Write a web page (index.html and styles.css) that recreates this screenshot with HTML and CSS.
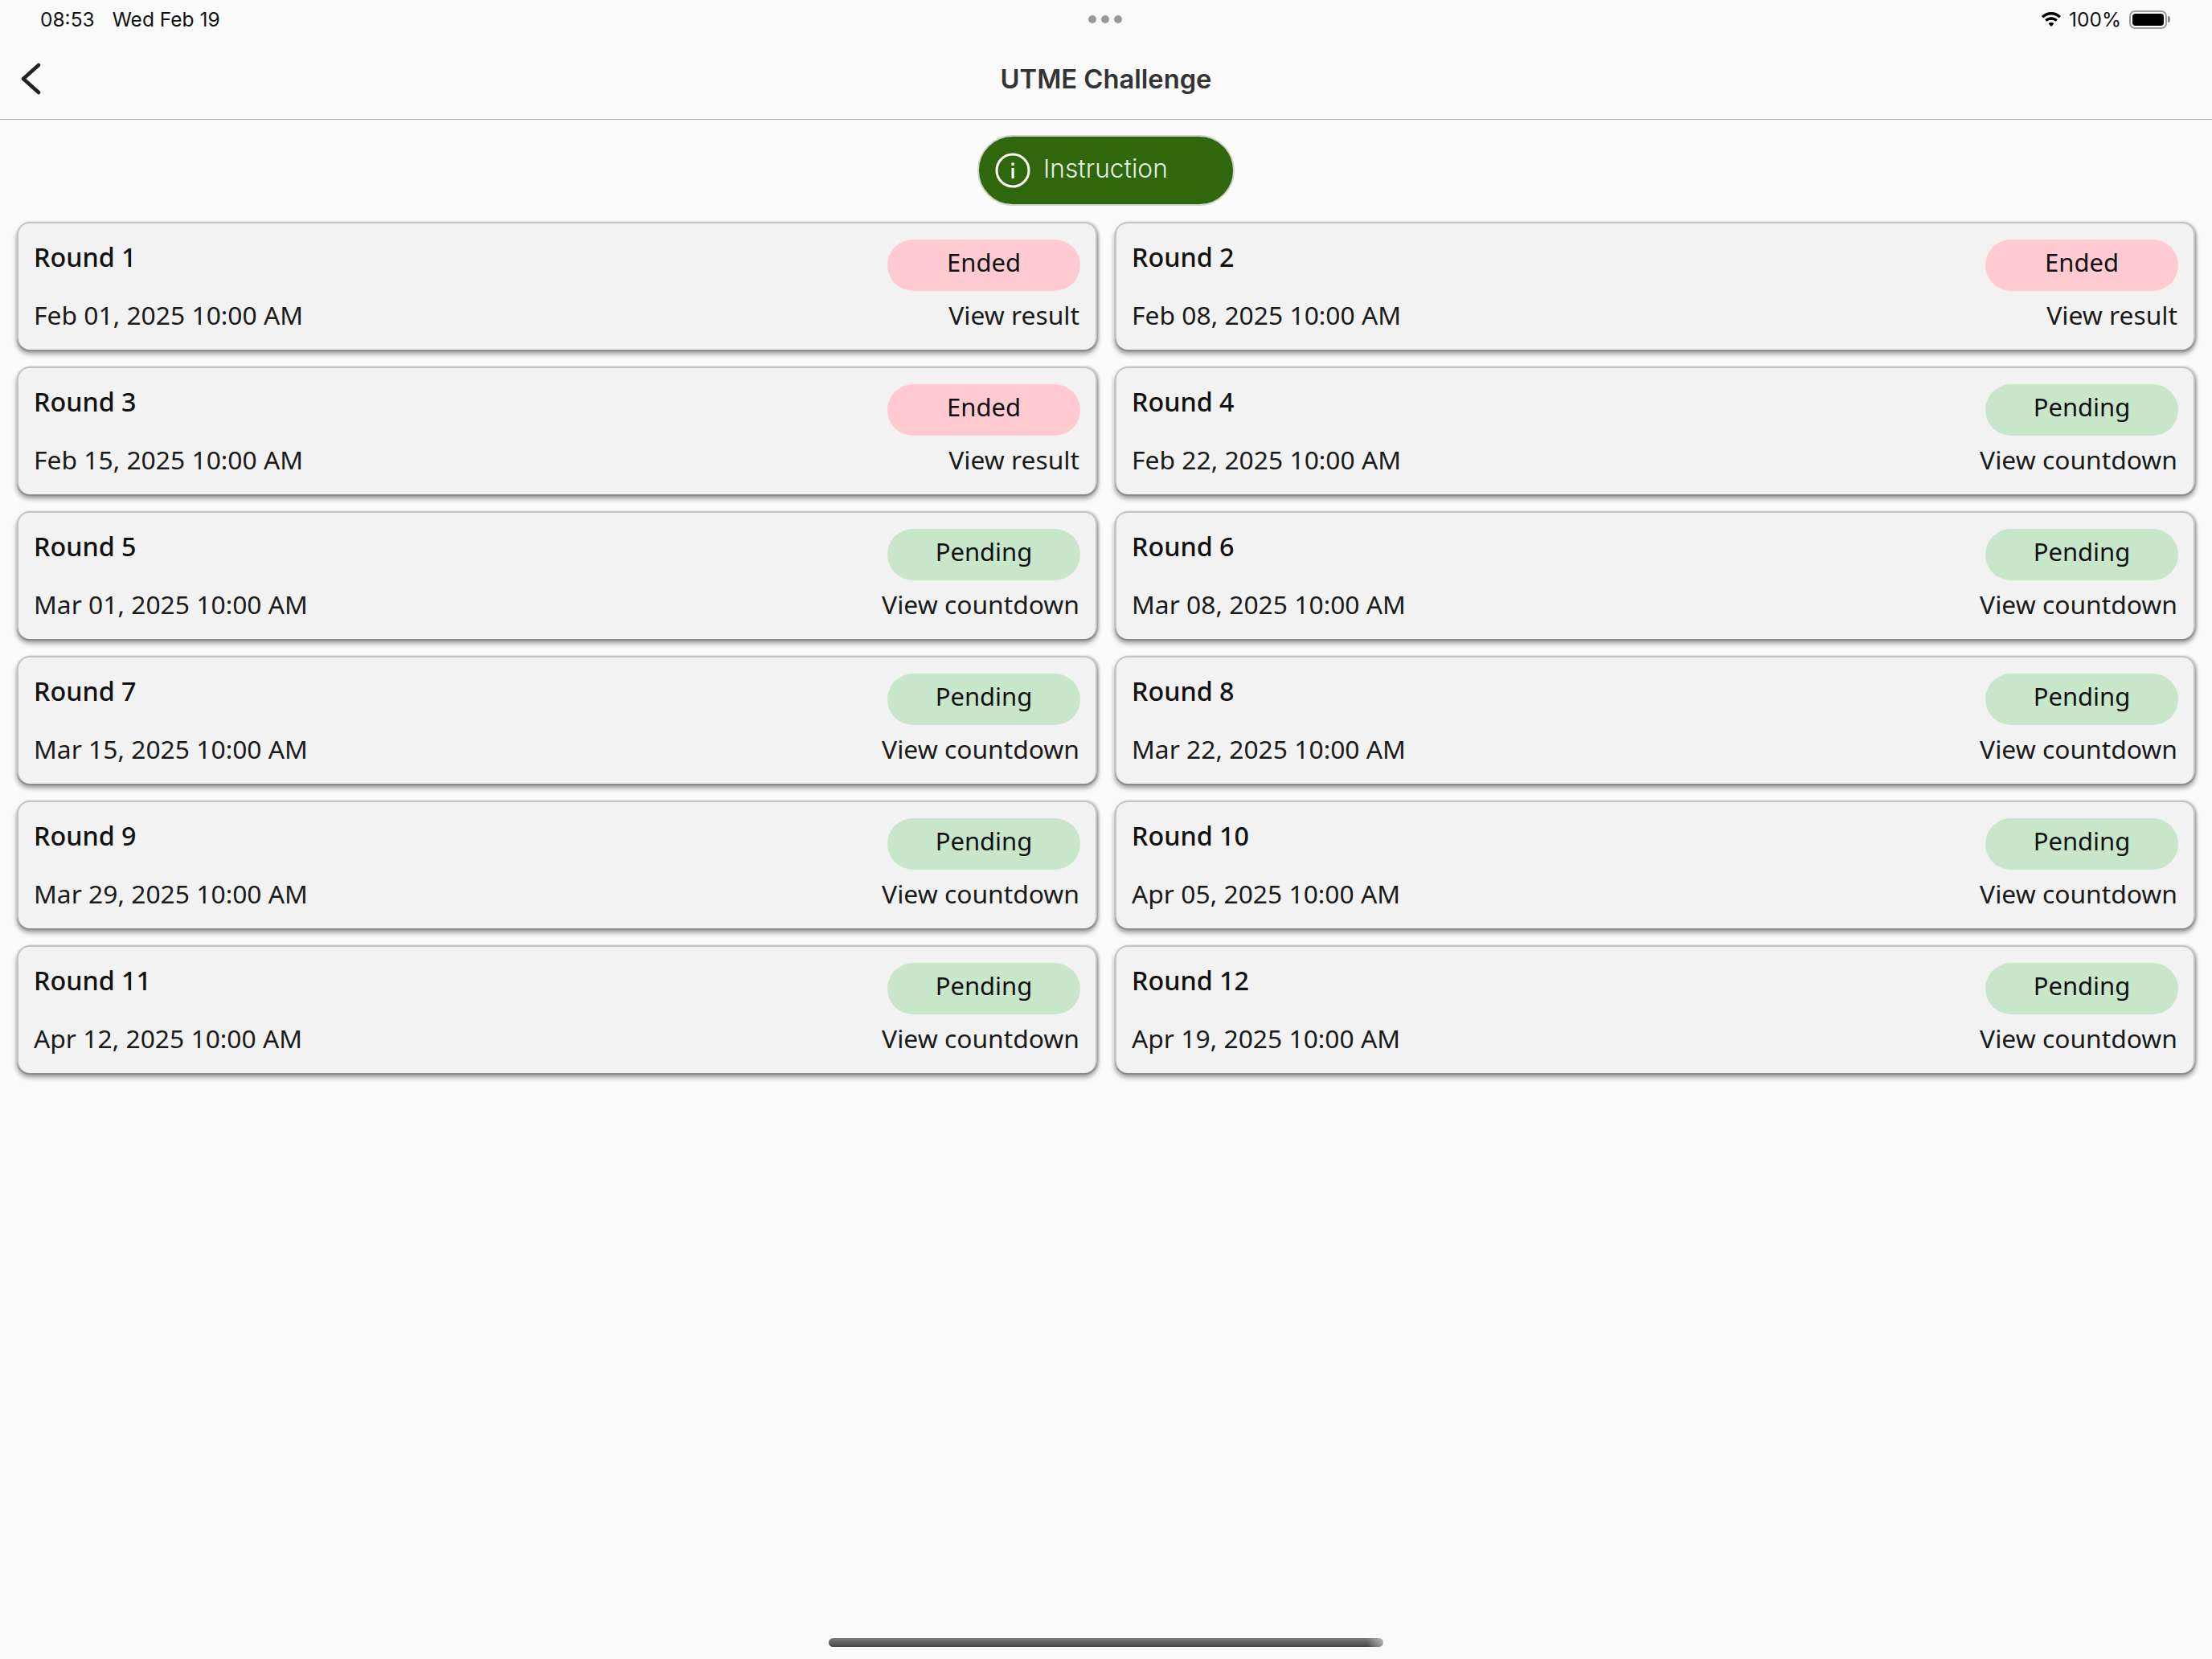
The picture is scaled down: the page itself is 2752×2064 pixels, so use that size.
FILE: index.html
```html
<!DOCTYPE html>
<html lang="en">
<head>
    <meta charset="UTF-8">
    <meta name="viewport" content="width=device-width, initial-scale=1.0">
    <title>UTME Challenge</title>
    <link rel="stylesheet" href="styles.css">
</head>
<body>
    <div class="status-bar">
        <div class="status-left"><span>08:53</span><span>Wed Feb 19</span></div>
        <div class="status-dots"><i></i><i></i><i></i></div>
        <div class="status-right">
            <svg class="wifi" width="28" height="21" viewBox="0 0 28 21"><path d="M14 4.600c3.700 0 7.100 1.400 9.700 3.800l2.300-2.400C22.800 2.900 18.600 1 14 1S5.200 2.900 2 6l2.300 2.400C6.900 6 10.300 4.600 14 4.600z"/><path d="M14 10.700c2.100 0 4 .8 5.500 2.100l2.300-2.400C19.700 8.500 17 7.300 14 7.300s-5.700 1.200-7.800 3.100l2.300 2.400c1.500-1.300 3.400-2.100 5.500-2.100z"/><path d="M14 14c-1.300 0-2.500.5-3.400 1.400L14 19l3.400-3.600c-.9-.9-2.100-1.400-3.400-1.400z"/></svg>
            <span>100%</span>
            <div class="battery"><div class="battery-fill"></div></div>
            <div class="battery-cap"></div>
        </div>
    </div>

    <header class="top-bar">
        <svg class="back" width="26" height="40" viewBox="0 0 26 40"><path d="M23 3 L4 20 L23 37" fill="none" stroke="#222" stroke-width="4.500" stroke-linecap="round" stroke-linejoin="round"/></svg>
        <h1>UTME Challenge</h1>
    </header>

    <div class="instruction-row">
        <button class="instruction">
            <svg width="44" height="44" viewBox="0 0 44 44"><circle cx="22" cy="22" r="20" fill="none" stroke="#fff" stroke-width="3"/><rect x="20.500" y="19" width="3.200" height="13" fill="#fff"/><rect x="20.500" y="12.500" width="3.200" height="3.400" fill="#fff"/></svg>
            <span>Instruction</span>
        </button>
    </div>

    <section class="rounds">
        <div class="round">
            <div class="round-info"><h3>Round 1</h3><p>Feb 01, 2025 10:00 AM</p></div>
            <div class="round-status"><span class="pill ended">Ended</span><p>View result</p></div>
        </div>
        <div class="round">
            <div class="round-info"><h3>Round 2</h3><p>Feb 08, 2025 10:00 AM</p></div>
            <div class="round-status"><span class="pill ended">Ended</span><p>View result</p></div>
        </div>
        <div class="round">
            <div class="round-info"><h3>Round 3</h3><p>Feb 15, 2025 10:00 AM</p></div>
            <div class="round-status"><span class="pill ended">Ended</span><p>View result</p></div>
        </div>
        <div class="round">
            <div class="round-info"><h3>Round 4</h3><p>Feb 22, 2025 10:00 AM</p></div>
            <div class="round-status"><span class="pill pending">Pending</span><p>View countdown</p></div>
        </div>
        <div class="round">
            <div class="round-info"><h3>Round 5</h3><p>Mar 01, 2025 10:00 AM</p></div>
            <div class="round-status"><span class="pill pending">Pending</span><p>View countdown</p></div>
        </div>
        <div class="round">
            <div class="round-info"><h3>Round 6</h3><p>Mar 08, 2025 10:00 AM</p></div>
            <div class="round-status"><span class="pill pending">Pending</span><p>View countdown</p></div>
        </div>
        <div class="round">
            <div class="round-info"><h3>Round 7</h3><p>Mar 15, 2025 10:00 AM</p></div>
            <div class="round-status"><span class="pill pending">Pending</span><p>View countdown</p></div>
        </div>
        <div class="round">
            <div class="round-info"><h3>Round 8</h3><p>Mar 22, 2025 10:00 AM</p></div>
            <div class="round-status"><span class="pill pending">Pending</span><p>View countdown</p></div>
        </div>
        <div class="round">
            <div class="round-info"><h3>Round 9</h3><p>Mar 29, 2025 10:00 AM</p></div>
            <div class="round-status"><span class="pill pending">Pending</span><p>View countdown</p></div>
        </div>
        <div class="round">
            <div class="round-info"><h3>Round 10</h3><p>Apr 05, 2025 10:00 AM</p></div>
            <div class="round-status"><span class="pill pending">Pending</span><p>View countdown</p></div>
        </div>
        <div class="round">
            <div class="round-info"><h3>Round 11</h3><p>Apr 12, 2025 10:00 AM</p></div>
            <div class="round-status"><span class="pill pending">Pending</span><p>View countdown</p></div>
        </div>
        <div class="round">
            <div class="round-info"><h3>Round 12</h3><p>Apr 19, 2025 10:00 AM</p></div>
            <div class="round-status"><span class="pill pending">Pending</span><p>View countdown</p></div>
        </div>
    </section>

    <div class="home-bar"></div>
</body>
</html>
```

FILE: styles.css
```css
html {
    height: 100%;
}

body {
    font-family: "Noto Sans", Arial, sans-serif;
    margin: 0;
    padding: 0;
    height: 2064px;
    overflow: hidden;
    display: flex;
    flex-direction: column;
    background-color: #fbfbfb;
    color: #1a1a1a;
}

.status-bar {
    height: 48px;
    display: grid;
    grid-template-columns: 1fr auto 1fr;
    align-items: center;
    padding: 0 52px 0 50px;
    font-family: Inter, Arial, sans-serif;
    font-size: 24.500px;
    color: #111;
}

.status-left {
    display: flex;
    gap: 22px;
}

.status-dots {
    display: flex;
    gap: 6px;
}

.status-dots i {
    width: 10px;
    height: 10px;
    border-radius: 50%;
    background-color: #9a9a9a;
}

.status-right {
    display: flex;
    align-items: center;
    justify-content: flex-end;
}

.wifi {
    margin-right: 8px;
}

.battery {
    width: 47px;
    height: 23px;
    margin-left: 10px;
    border: 2px solid #9c9c9c;
    border-radius: 7px;
    padding: 2px;
    box-sizing: border-box;
}

.battery-fill {
    height: 100%;
    background-color: #000;
    border-radius: 4px;
}

.battery-cap {
    width: 3px;
    height: 8px;
    margin-left: 1px;
    background-color: #8c8c8c;
    border-radius: 0 3px 3px 0;
}

.top-bar {
    height: 100px;
    display: flex;
    align-items: center;
    justify-content: center;
    position: relative;
    border-bottom: 1px solid #b4b4b4;
}

.top-bar h1 {
    margin: 0;
    font-family: Inter, Arial, sans-serif;
    font-size: 32.700px;
    font-weight: 600;
    color: #333;
}

.back {
    position: absolute;
    left: 25px;
    top: 30px;
}

.instruction-row {
    display: flex;
    justify-content: center;
    margin-top: 19px;
}

.instruction {
    width: 320px;
    height: 88px;
    display: flex;
    align-items: center;
    gap: 16px;
    padding: 0 0 0 20px;
    box-sizing: border-box;
    background-color: #30670d;
    border: 2px solid #d2d2d2;
    border-radius: 44px;
    color: #e8efe4;
    font-family: Inter, Arial, sans-serif;
    font-size: 31.700px;
    font-weight: 300;
}

.instruction span {
    margin-bottom: 5px;
}

.rounds {
    display: grid;
    grid-template-columns: 1fr 1fr;
    grid-auto-rows: 159px;
    gap: 21px 22px;
    padding: 0 21px;
    margin-top: 20px;
}

.round {
    display: flex;
    justify-content: space-between;
    background: #f2f2f2;
    border: 2px solid #c4c4c4;
    border-bottom: none;
    border-radius: 16px;
    padding: 20px 19px 0;
    box-shadow: 0 2px 1px #8a8a8a, 0 5px 6px rgba(0, 0, 0, 0.42), 2px 0 3px rgba(0, 0, 0, 0.18);
}

.round h3 {
    margin: 0;
    font-size: 32.300px;
    line-height: 43px;
    font-weight: 500;
    color: #111;
}

.round p {
    margin: 0;
    font-size: 31.800px;
    line-height: 44px;
}

.round-info p {
    margin-top: 29px;
}

.round-status {
    display: flex;
    flex-direction: column;
    align-items: flex-end;
}

.pill {
    width: 240px;
    height: 64px;
    border-radius: 32px;
    font-size: 31px;
    line-height: 56px;
    text-align: center;
    color: #111;
}

.pill.ended {
    background-color: #ffcbd0;
}

.pill.pending {
    background-color: #c8e6c9;
}

.round-status p {
    margin-top: 8px;
    padding-right: 1px;
}

.home-bar {
    width: 690px;
    height: 11px;
    margin: auto auto 15px;
    border-radius: 6px;
    background: linear-gradient(to right, transparent 97%, rgba(251, 251, 251, 0.5)), linear-gradient(#7c7c7c, #454545);
}
```
